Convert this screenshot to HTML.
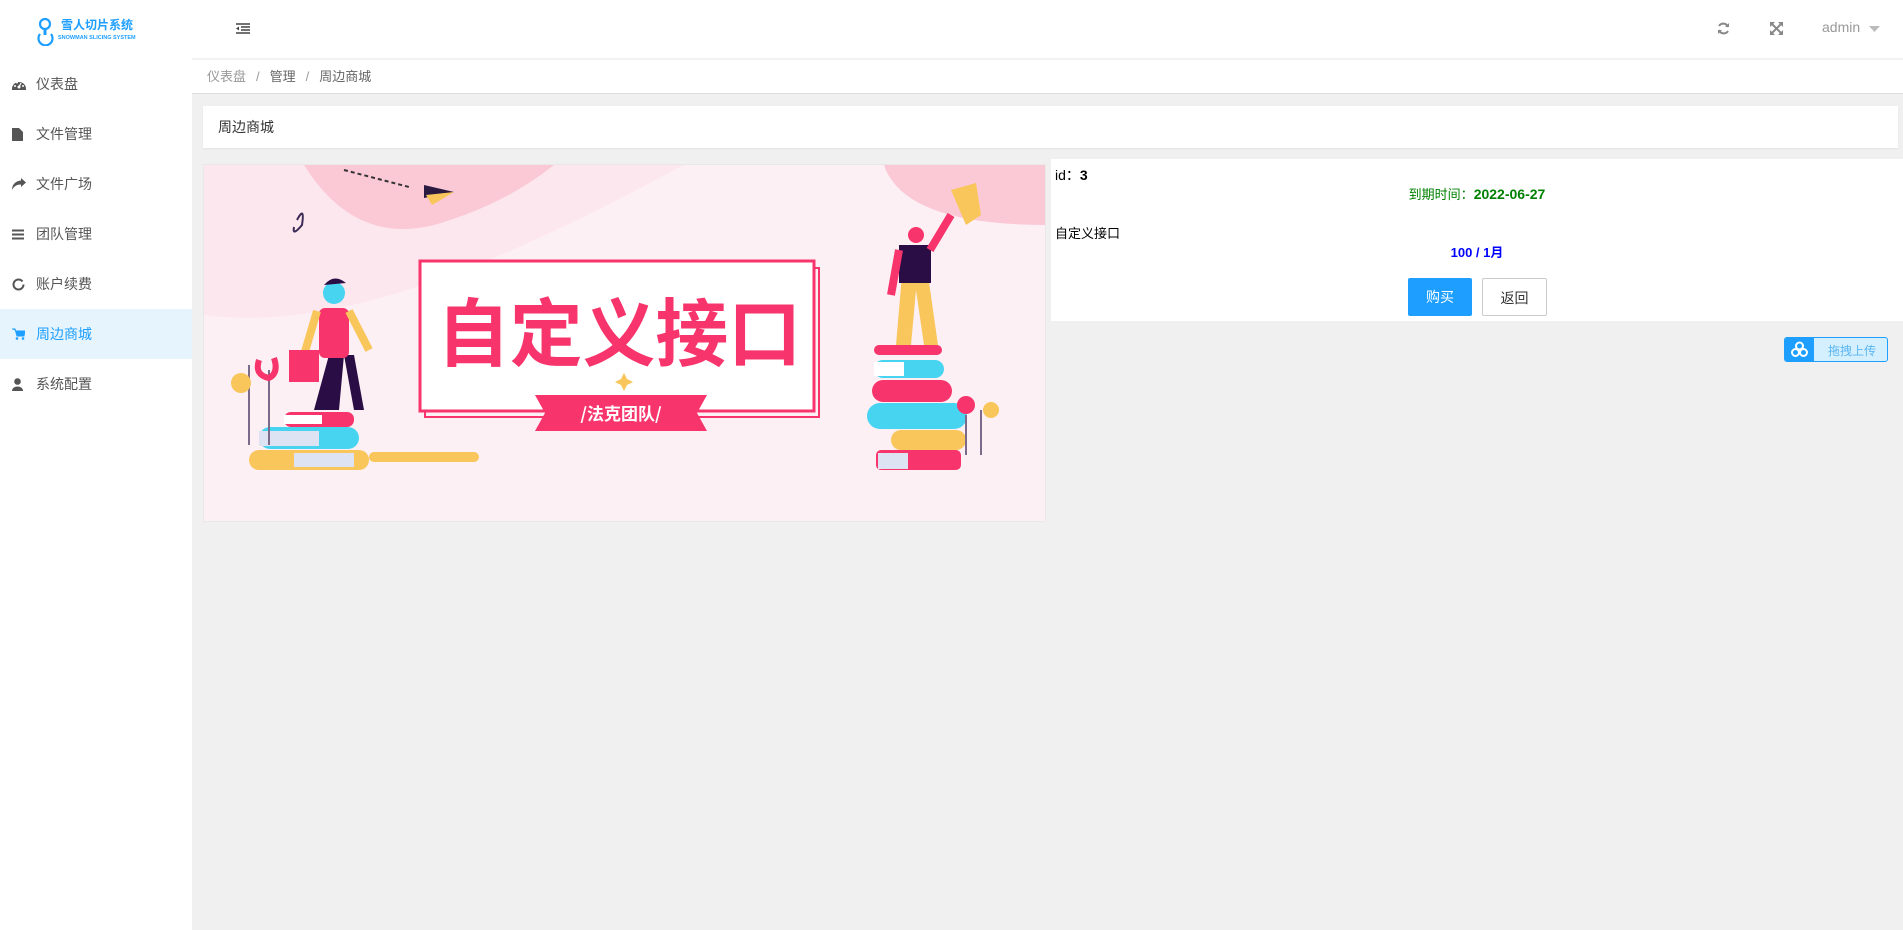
<!DOCTYPE html>
<html><head><meta charset="utf-8"><style>
*{margin:0;padding:0;box-sizing:border-box}
body{width:1903px;height:930px;background:#f0f0f0;font-family:"Liberation Sans","Noto Sans CJK SC",sans-serif;position:relative;overflow:hidden;color:#333}
.side{position:absolute;left:0;top:0;width:192px;height:930px;background:#fff}
.logo{position:absolute;left:36px;top:16px}
.mi{position:absolute;left:0;width:192px;height:50px;font-size:14px;color:#555;line-height:50px}
.mi .ic{position:absolute;left:12px;top:0;width:14px;height:50px;display:flex;align-items:center}
.mi span.t{position:absolute;left:36px}
.mi.act{background:#e6f4fe;color:#1e9fff}
.top{position:absolute;left:192px;top:0;right:0;height:59px;background:#fff;border-bottom:1px solid #f2f2f2}
.bc{position:absolute;left:192px;top:60px;right:0;height:34px;background:#fff;border-bottom:1px solid #ddd;font-size:13px;line-height:34px;padding-left:15px;color:#666}
.bc i{font-style:normal;color:#999;margin:0 10px}
.card{position:absolute;left:203px;top:106px;width:1695px;height:42px;background:#fff;font-size:14px;line-height:42px;padding-left:15px;color:#333;box-shadow:0 1px 2px rgba(0,0,0,.05)}
.ban{position:absolute;left:203px;top:164px;width:843px;height:358px;overflow:hidden;border:1px solid #e8e8e8}
.rp{position:absolute;left:1051px;top:159px;width:852px;height:162px;background:#fff;font-size:13px;color:#000}
.btn{position:absolute;top:119px;height:38px;line-height:38px;text-align:center;font-size:14px;border-radius:2px}
</style></head><body>
<div class="side">
 <div class="logo">
  <svg width="104" height="30" viewBox="0 0 104 30"><g fill="none" stroke="#1e9fff" stroke-width="2.2"><circle cx="9" cy="8" r="5"/><path d="M4 18a7 7 0 1 0 11 0"/></g><path d="M9 13v6" stroke="#1e9fff" stroke-width="3"/>
  <text x="25" y="13" font-size="12" font-weight="bold" fill="#1e9fff" font-family="Noto Sans CJK SC">雪人切片系统</text>
  <text x="22" y="23" font-size="5.5" fill="#1e9fff" font-weight="bold">SNOWMAN SLICING SYSTEM</text></svg>
 </div>
 <div class="mi" style="top:59px"><span class="ic"><svg width="14" height="11" viewBox="0 0 14 11"><path d="M0 10A7 7 0 0 1 14 10V11H0z" fill="#555"/><circle cx="7" cy="8" r="1.5" fill="#fff"/><path d="M7 8L9 4" stroke="#fff" stroke-width="1.2"/><circle cx="3" cy="7" r="1" fill="#fff"/><circle cx="11" cy="7" r="1" fill="#fff"/><circle cx="5" cy="3.5" r="1" fill="#fff"/></svg></span><span class="t">仪表盘</span></div>
 <div class="mi" style="top:109px"><span class="ic"><svg width="11" height="13"><path d="M0 0h7l4 4v9H0z" fill="#555"/></svg></span><span class="t">文件管理</span></div>
 <div class="mi" style="top:159px"><span class="ic"><svg width="14" height="12" viewBox="0 0 14 12"><path d="M9 0l5 4.5L9 9V6.5C5 6.5 2 8 0 12 0 6 4 3 9 2.5z" fill="#555"/></svg></span><span class="t">文件广场</span></div>
 <div class="mi" style="top:209px"><span class="ic"><svg width="12" height="11"><path d="M0 1.5h12M0 5.5h12M0 9.5h12" stroke="#555" stroke-width="2"/></svg></span><span class="t">团队管理</span></div>
 <div class="mi" style="top:259px"><span class="ic"><svg width="13" height="13"><circle cx="6.5" cy="6.5" r="5" fill="none" stroke="#555" stroke-width="2" stroke-dasharray="28 4"/></svg></span><span class="t">账户续费</span></div>
 <div class="mi act" style="top:309px"><span class="ic"><svg width="13" height="12"><path d="M0 1h3l2 7h7l1-5H4" fill="#1e9fff" stroke="#1e9fff"/><circle cx="5" cy="10.5" r="1.3" fill="#1e9fff"/><circle cx="11" cy="10.5" r="1.3" fill="#1e9fff"/></svg></span><span class="t">周边商城</span></div>
 <div class="mi" style="top:359px"><span class="ic"><svg width="11" height="13"><circle cx="5.5" cy="3.5" r="3.3" fill="#555"/><path d="M0 13c0-6 11-6 11 0z" fill="#555"/></svg></span><span class="t">系统配置</span></div>
</div>
<div class="top">
 <svg style="position:absolute;left:44px;top:23px" width="14" height="11"><path d="M0 1h14M5 4h9M5 7h9M0 10h14" stroke="#444" stroke-width="1.6"/><path d="M0 5.5l3-2v4z" fill="#444"/></svg>
 <svg style="position:absolute;left:1525px;top:22px" width="13" height="13" viewBox="0 0 13 13"><path d="M11 5A5 5 0 0 0 2 4M2 8a5 5 0 0 0 9 1" fill="none" stroke="#888" stroke-width="2"/><path d="M12 1v4H8zM1 12V8h4z" fill="#888"/></svg>
 <svg style="position:absolute;left:1578px;top:22px" width="13" height="13" viewBox="0 0 13 13"><path d="M1 1l11 11M12 1L1 12" stroke="#888" stroke-width="2"/><path d="M0 0h5L0 5zM13 0v5L8 0zM0 13v-5l5 5zM13 13h-5l5-5z" fill="#888"/></svg>
 <span style="position:absolute;left:1630px;top:19px;font-size:14px;color:#999">admin</span>
 <svg style="position:absolute;left:1677px;top:26px" width="11" height="6"><path d="M0 0h11L5.5 6z" fill="#bbb"/></svg>
</div>
<div class="bc"><span style="color:#999">仪表盘</span><i>/</i>管理<i>/</i>周边商城</div>
<div class="card">周边商城</div>
<div class="ban">
<svg width="843" height="358" viewBox="0 0 843 358">
 <rect width="843" height="358" fill="#fde7ee"/>
 <path d="M0 150 C150 170 330 80 480 0 L843 0 L843 358 L0 358z" fill="#fdf0f4"/>
 <path d="M100 0 Q150 80 230 60 Q300 40 350 0z" fill="#fbc8d6"/>
 <path d="M680 0 Q700 60 843 60 V0z" fill="#fbc8d6"/>
 <path d="M140 5 L205 22" stroke="#333" stroke-width="2" stroke-dasharray="4 3"/>
 <path d="M220 20 L250 27 L220 33z" fill="#2a1a40"/><path d="M222 30 L250 27 L228 40z" fill="#f9c65b"/>
 <path d="M93 55 q8 -15 5 5 q-10 12 -8 2" fill="none" stroke="#3b2a55" stroke-width="2"/>
 <rect x="221" y="103" width="394" height="149" fill="none" stroke="#f7346b" stroke-width="2"/>
 <rect x="216" y="96" width="394" height="150" fill="#fff" stroke="#f7346b" stroke-width="3"/>
 <text x="233" y="195" font-size="74" font-weight="bold" fill="#f7346b" font-family="Noto Sans CJK SC" textLength="364" lengthAdjust="spacingAndGlyphs">自定义接口</text>
 <path d="M331 230 L503 230 L493 248 L503 266 L331 266 L341 248z" fill="#f7346b"/>
 <text x="417" y="255" text-anchor="middle" font-size="17" font-weight="bold" fill="#fff" font-family="Noto Sans CJK SC">/法克团队/</text>
 <path d="M420 208 l3 6 6 3 -6 3 -3 6 -3 -6 -6 -3 6 -3z" fill="#f9c65b"/>
 <rect x="45" y="285" width="120" height="20" rx="10" fill="#f9c65b"/>
 <rect x="90" y="288" width="60" height="14" fill="#dde3f3"/>
 <rect x="165" y="287" width="110" height="10" rx="5" fill="#f9c65b"/>
 <rect x="55" y="262" width="100" height="22" rx="11" fill="#46d4f1"/>
 <rect x="55" y="266" width="60" height="15" fill="#dde3f3"/>
 <rect x="80" y="247" width="70" height="15" rx="7" fill="#f7346b"/><rect x="80" y="250" width="38" height="9" fill="#fff"/>
 <path d="M110 245 L125 190 L140 190 L135 245z M140 190 L150 245 L160 245 L150 190z" fill="#2a0d45"/>
 <rect x="115" y="143" width="30" height="50" rx="6" fill="#f7346b"/>
 <path d="M113 146 L100 190 M145 146 L165 185" stroke="#f9c65b" stroke-width="8"/>
 <rect x="85" y="185" width="30" height="32" fill="#f7346b"/>
 <circle cx="130" cy="128" r="11" fill="#46d4f1"/><path d="M120 120 q10 -12 22 -2" fill="#2a0d45"/>
 <path d="M45 280 V200 M65 280 V205" stroke="#7b6a8a" stroke-width="2"/>
 <circle cx="37" cy="218" r="10" fill="#f9c65b"/><path d="M55 195 q-5 15 10 18 q10 -5 5 -20" fill="none" stroke="#f7346b" stroke-width="6"/>
 <g transform="translate(122,0)">
 <rect x="548" y="180" width="68" height="10" rx="5" fill="#f7346b"/>
 <rect x="546" y="215" width="80" height="22" rx="11" fill="#f7346b"/>
 <rect x="541" y="238" width="100" height="26" rx="13" fill="#46d4f1"/>
 <rect x="565" y="265" width="75" height="20" rx="10" fill="#f9c65b"/>
 <rect x="550" y="285" width="85" height="20" rx="5" fill="#f7346b"/><rect x="552" y="288" width="30" height="16" fill="#dde3f3"/>
 <rect x="548" y="195" width="70" height="18" rx="9" fill="#46d4f1"/><rect x="548" y="197" width="30" height="14" fill="#fff"/>
 <path d="M576 110 L570 180 L585 180 L590 125 L598 180 L612 180 L602 110z" fill="#f9c65b"/>
 <rect x="573" y="80" width="32" height="38" fill="#2a0d45"/>
 <path d="M573 85 L565 130 M604 85 L625 50" stroke="#f7346b" stroke-width="8"/>
 <circle cx="590" cy="70" r="8" fill="#f7346b"/>
 <path d="M625 25 L650 18 L655 50 L640 60z" fill="#f9c65b"/>
 <circle cx="640" cy="240" r="9" fill="#f7346b"/><circle cx="665" cy="245" r="8" fill="#f9c65b"/>
 <path d="M655 290 V245 M640 290 V250" stroke="#7b6a8a" stroke-width="2"/>
 </g>
</svg>
</div>
<div class="rp">
 <div style="position:absolute;left:4px;top:6px;font-size:14px">id：<b>3</b></div>
 <div style="position:absolute;left:0;width:852px;text-align:center;top:25px;color:#008000;font-size:13px">到期时间：<b style="font-size:14px">2022-06-27</b></div>
 <div style="position:absolute;left:4px;top:64px">自定义接口</div>
 <div style="position:absolute;left:0;width:852px;text-align:center;top:83px;color:#00f;font-weight:bold;font-size:13px">100 / 1月</div>
 <div class="btn" style="left:357px;width:64px;background:#1e9fff;color:#fff">购买</div>
 <div class="btn" style="left:431px;width:65px;border:1px solid #ccc;color:#333">返回</div>
</div>
<div style="position:absolute;left:1784px;top:337px;width:104px;height:25px;border:1px solid #1e9fff;border-radius:3px;background:#d4f0ff;overflow:hidden">
 <div style="position:absolute;left:0;top:0;width:29px;height:25px;background:#1e9fff"><svg width="29" height="23"><g fill="none" stroke="#fff" stroke-width="2"><circle cx="14.5" cy="8" r="3.5"/><circle cx="10.5" cy="14.5" r="3.5"/><circle cx="18.5" cy="14.5" r="3.5"/></g></svg></div>
 <span style="position:absolute;left:43px;top:4px;font-size:12px;color:#5ab5f0">拖拽上传</span>
</div>
</body></html>
